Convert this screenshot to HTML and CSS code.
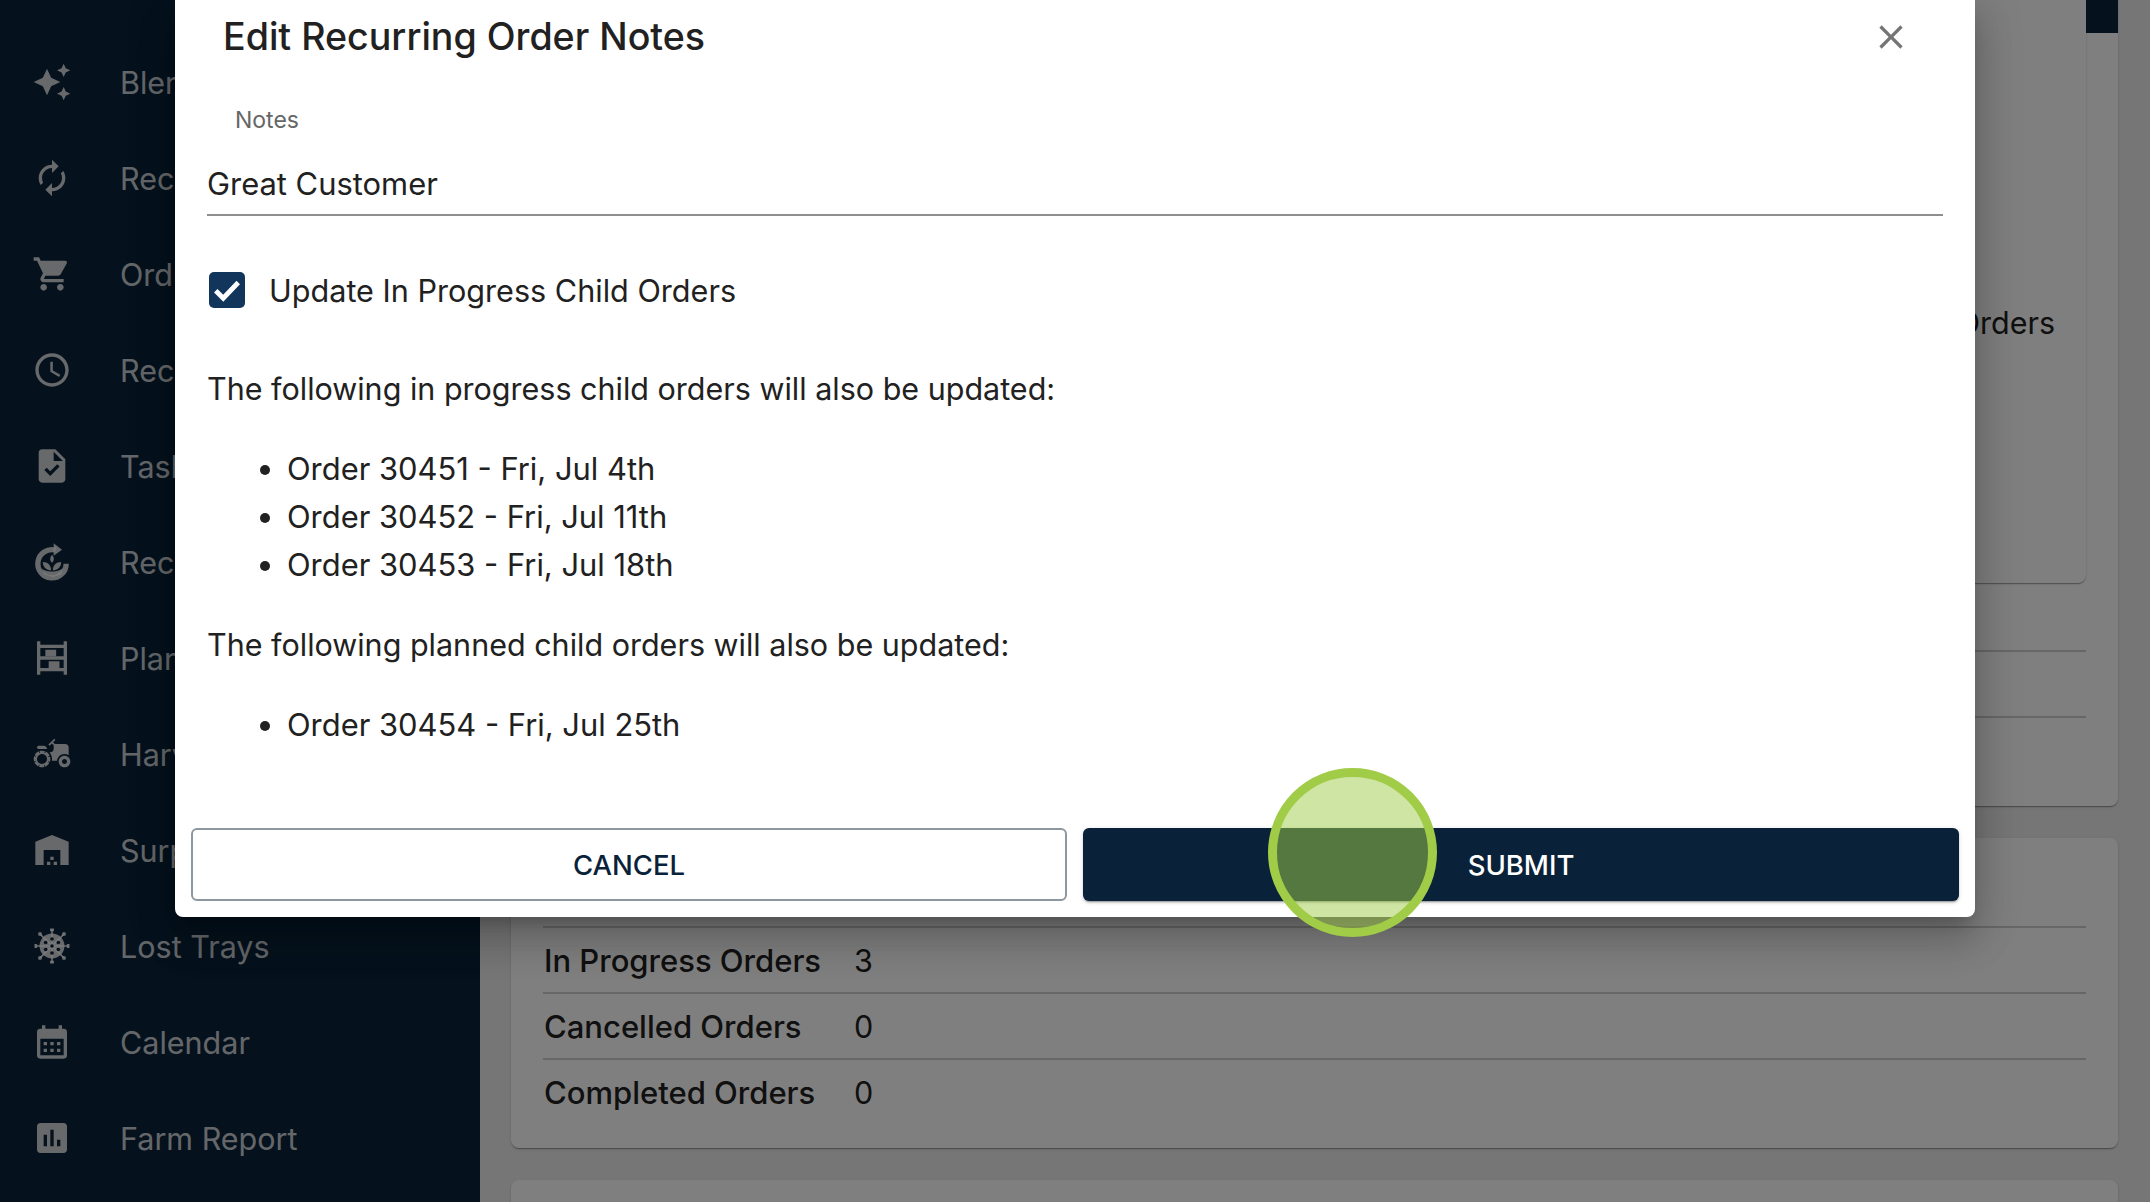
FILE: index.html
```html
<!DOCTYPE html>
<html lang="en">
<head>
<meta charset="utf-8">
<title>Edit Recurring Order Notes</title>
<link rel="stylesheet" href="styles.css">
</head>
<body>
<div class="app">
  <nav class="sidebar">
    <a class="nav-item"><svg class="nav-icon" viewBox="0 0 24 24"><path d="M19 9l1.250-2.750L23 5l-2.750-1.250L19 1l-1.250 2.750L15 5l2.750 1.250L19 9zm-7.500.5L9 4 6.500 9.500 1 12l5.500 2.500L9 20l2.500-5.500L17 12l-5.500-2.500zM19 15l-1.250 2.750L15 19l2.750 1.250L19 23l1.250-2.750L23 19l-2.750-1.250L19 15z"/></svg><span>Blen</span></a>
    <a class="nav-item"><svg class="nav-icon" viewBox="0 0 24 24"><path d="M12 6v3l4-4-4-4v3c-4.420 0-8 3.580-8 8 0 1.570.46 3.030 1.240 4.260L6.700 14.800c-.45-.83-.7-1.790-.7-2.800 0-3.310 2.690-6 6-6zm6.760 1.740L17.300 9.200c.44.84.7 1.790.7 2.800 0 3.310-2.690 6-6 6v-3l-4 4 4 4v-3c4.420 0 8-3.580 8-8 0-1.570-.46-3.030-1.240-4.260z"/></svg><span>Rec</span></a>
    <a class="nav-item"><svg class="nav-icon" viewBox="0 0 24 24"><path d="M7 18c-1.100 0-1.990.9-1.990 2S5.900 22 7 22s2-.9 2-2-.9-2-2-2zM1 2v2h2l3.600 7.590-1.350 2.450c-.16.28-.25.61-.25.96 0 1.100.9 2 2 2h12v-2H7.420c-.14 0-.25-.11-.25-.25l.03-.12.9-1.630h7.450c.75 0 1.410-.41 1.750-1.030l3.580-6.490c.08-.14.12-.31.12-.48 0-.55-.45-1-1-1H5.210l-.94-2H1zm16 16c-1.100 0-1.990.9-1.990 2s.89 2 1.990 2 2-.9 2-2-.9-2-2-2z"/></svg><span>Ord</span></a>
    <a class="nav-item"><svg class="nav-icon" viewBox="0 0 24 24"><path d="M11.990 2C6.470 2 2 6.480 2 12s4.470 10 9.990 10C17.520 22 22 17.520 22 12S17.520 2 11.990 2zM12 20c-4.420 0-8-3.580-8-8s3.580-8 8-8 8 3.580 8 8-3.580 8-8 8zm.5-13H11v6l5.250 3.150.75-1.230-4.500-2.670z"/></svg><span>Rec</span></a>
    <a class="nav-item"><svg class="nav-icon" viewBox="0 0 24 24"><path d="M14 2H6c-1.100 0-1.990.9-1.990 2L4 20c0 1.100.89 2 1.990 2H18c1.100 0 2-.9 2-2V8l-6-6zm-3.060 16L7.400 14.460l1.410-1.410 2.120 2.120 4.240-4.240 1.410 1.410L10.940 18zM13 9V3.500L18.500 9H13z"/></svg><span>Task</span></a>
    <a class="nav-item"><svg class="nav-icon" viewBox="0 0 24 24"><path class="nav-ring" d="M14 4.800A8.500 8.500 0 1 0 20.500 13"/><path d="M13 .8l5 3.800-5 3.700zM11.500 17c-3 0-5-2-5-5 3 0 5 2 5 5zM12.500 17c0-3 2-5 5-5 0 3-2 5-5 5zM12 12.500c-1.500-1.300-1.500-3 0-4.800 1.500 1.800 1.500 3.500 0 4.800zM5.500 15.500c2 3 11 3 13 0l-1 4-5 1.500-5-1.500z"/></svg><span>Rec</span></a>
    <a class="nav-item"><svg class="nav-icon" viewBox="0 0 24 24"><path fill-rule="evenodd" d="M3 2h2v2h14V2h2v20h-2v-2H5v2H3zM5 6v5h14V6zM5 13v5h14v-5z"/><path d="M8 7h6.500v4H8zM10 14h6.500v4H10z"/></svg><span>Plan</span></a>
    <a class="nav-item"><svg class="nav-icon" viewBox="0 0 24 24"><path d="M19.500 12c.93 0 1.780.28 2.500.76V8c0-1.100-.9-2-2-2h-6.290l-1.060-1.060 1.410-1.410-.71-.71L9.820 6.350l.71.71 1.410-1.410L13 6.710V9c0 1.100-.9 2-2 2h-.54c.95 1.060 1.540 2.460 1.540 4 0 .34-.04.67-.09 1h3.140c.25-2.250 2.140-4 4.450-4zm0 1c-1.930 0-3.500 1.570-3.500 3.500s1.570 3.500 3.500 3.500 3.500-1.570 3.500-3.500-1.570-3.500-3.500-3.500zm0 5c-.83 0-1.500-.67-1.500-1.500s.67-1.500 1.500-1.500 1.500.67 1.500 1.500-.67 1.500-1.500 1.500zM4 9h5c0-1.100-.9-2-2-2H4c-.55 0-1 .45-1 1s.45 1 1 1zm5.830 4.820l-.18-.47.93-.35c-.46-1.060-1.280-1.910-2.310-2.430l-.4.89-.46-.21.4-.9C7.260 10.130 6.640 10 6 10c-.53 0-1.040.11-1.520.26l.34.91-.47.18L4 10.420c-1.060.46-1.910 1.280-2.430 2.310l.89.4-.21.46-.9-.4C1.130 13.740 1 14.360 1 15c0 .53.11 1.040.26 1.520l.91-.34.18.47-.93.35c.46 1.060 1.280 1.910 2.310 2.430l.4-.89.46.21-.4.9c.55.22 1.170.35 1.810.35.53 0 1.040-.11 1.520-.26l-.34-.91.47-.18.35.93c1.060-.46 1.910-1.280 2.430-2.310l-.89-.4.21-.46.9.4c.22-.55.35-1.170.35-1.810 0-.53-.11-1.040-.26-1.520l-.91.34zm-2.680 3.950c-1.530.63-3.290-.09-3.920-1.620-.63-1.530.09-3.290 1.620-3.920 1.530-.63 3.290.09 3.920 1.620.64 1.530-.09 3.290-1.620 3.920z"/></svg><span>Harv</span></a>
    <a class="nav-item"><svg class="nav-icon" viewBox="0 0 24 24"><path d="M22 21V7L12 3 2 7v14h5v-9h10v9h5zm-11-2H9v2h2v-2zm2-3h-2v2h2v-2zm2 3h-2v2h2v-2z"/></svg><span>Surp</span></a>
    <a class="nav-item"><svg class="nav-icon" viewBox="0 0 24 24"><path class="nav-spikes" d="M12 2v20M2 12h20M5 5l14 14M19 5L5 19"/><path d="M10.800 1.500h2.400v1.600h-2.400zM10.800 20.900h2.400v1.600h-2.400zM1.500 10.800h1.600v2.400H1.500zM20.900 10.800h1.600v2.400h-1.600z"/><circle cx="4.800" cy="4.800" r="1.200"/><circle cx="19.200" cy="4.800" r="1.200"/><circle cx="4.800" cy="19.200" r="1.200"/><circle cx="19.200" cy="19.200" r="1.200"/><circle cx="12" cy="12" r="7.500"/><circle class="nav-cut" cx="12" cy="7.800" r="1.100"/><circle class="nav-cut" cx="8.200" cy="9.900" r="1.100"/><circle class="nav-cut" cx="15.800" cy="9.900" r="1.100"/><circle class="nav-cut" cx="12" cy="12" r="1.100"/><circle class="nav-cut" cx="8.200" cy="14.100" r="1.100"/><circle class="nav-cut" cx="15.800" cy="14.100" r="1.100"/><circle class="nav-cut" cx="12" cy="16.200" r="1.100"/></svg><span>Lost Trays</span></a>
    <a class="nav-item"><svg class="nav-icon" viewBox="0 0 24 24"><path d="M19 4h-1V2h-2v2H8V2H6v2H5a2 2 0 0 0-2 2v14a2 2 0 0 0 2 2h14a2 2 0 0 0 2-2V6a2 2 0 0 0-2-2zm0 16H5V10h14v10zM7 12h2v2H7zM11 12h2v2h-2zM15 12h2v2h-2zM7 16h2v2H7zM11 16h2v2h-2zM15 16h2v2h-2z"/></svg><span>Calendar</span></a>
    <a class="nav-item"><svg class="nav-icon" viewBox="0 0 24 24"><path d="M19 3H5c-1.100 0-2 .9-2 2v14c0 1.100.9 2 2 2h14c1.100 0 2-.9 2-2V5c0-1.100-.9-2-2-2zM9 17H7v-7h2v7zm4 0h-2V7h2v10zm4 0h-2v-4h2v4z"/></svg><span>Farm Report</span></a>
  </nav>

  <main class="content">
    <section class="card card-top">
      <div class="corner-tab"></div>
      <div class="inner-card">Orders</div>
      <div class="row row-first"></div>
      <div class="row"></div>
      <div class="row"></div>
    </section>
    <section class="card card-stats">
      <div class="row"><span class="row-label">In Progress Orders</span><span>3</span></div>
      <div class="row"><span class="row-label">Cancelled Orders</span><span>0</span></div>
      <div class="row"><span class="row-label">Completed Orders</span><span>0</span></div>
    </section>
    <section class="card card-next"></section>
  </main>
</div>

<div class="overlay"></div>

<div class="modal" role="dialog">
  <header class="modal-head">
    <h2 class="modal-title">Edit Recurring Order Notes</h2>
    <svg class="close-icon" viewBox="0 0 24 24"><path d="M19 6.410 17.590 5 12 10.590 6.410 5 5 6.410 10.590 12 5 17.590 6.410 19 12 13.410 17.590 19 19 17.590 13.410 12z"/></svg>
  </header>
  <div class="modal-body">
    <div class="field">
      <div class="field-label">Notes</div>
      <div class="field-value">Great Customer</div>
    </div>
    <div class="check-row">
      <span class="check-box"><svg viewBox="0 0 24 24"><path d="M4.500 12.500l5 5L19.500 7"/></svg></span>
      <span>Update In Progress Child Orders</span>
    </div>
    <p class="copy">The following in progress child orders will also be updated:</p>
    <ul class="orders">
      <li>Order 30451 - Fri, Jul 4th</li>
      <li>Order 30452 - Fri, Jul 11th</li>
      <li>Order 30453 - Fri, Jul 18th</li>
    </ul>
    <p class="copy">The following planned child orders will also be updated:</p>
    <ul class="orders">
      <li>Order 30454 - Fri, Jul 25th</li>
    </ul>
  </div>
  <footer class="modal-actions">
    <button class="btn btn-outline">CANCEL</button>
    <button class="btn btn-solid">SUBMIT</button>
  </footer>
</div>

<div class="click-marker"></div>
</body>
</html>
```

FILE: styles.css
```css
* { box-sizing: border-box; }

html, body {
  margin: 0;
  height: 1202px;
  overflow: hidden;
}

body {
  position: relative;
  font-family: Inter, "Noto Sans", sans-serif;
  color: #212121;
  background: #ececec;
}

.app {
  display: flex;
  height: 1202px;
}

.sidebar {
  flex: 0 0 480px;
  padding-top: 34px;
  background: #0a2239;
  color: rgba(255, 255, 255, .8);
}

.nav-item {
  display: flex;
  align-items: center;
  height: 96px;
  padding-left: 32px;
  gap: 48px;
  font-size: 30.500px;
  white-space: nowrap;
}

.nav-icon {
  flex: 0 0 40px;
  width: 40px;
  height: 40px;
  fill: currentColor;
}

.nav-cut { fill: #0a2239; }

.nav-ring {
  fill: none;
  stroke: currentColor;
  stroke-width: 3.200;
}

.nav-spikes {
  fill: none;
  stroke: currentColor;
  stroke-width: 1;
}

.content {
  flex: 0 0 1607px;
  margin-left: 31px;
  display: flex;
  flex-direction: column;
  gap: 32px;
}

.card {
  position: relative;
  flex: none;
  padding: 0 32px 23px;
  background: #fff;
  border-radius: 8px;
  box-shadow: 0 2px 1px -1px rgba(0,0,0,.2), 0 1px 1px 0 rgba(0,0,0,.14), 0 1px 3px 0 rgba(0,0,0,.12);
  font-size: 30.500px;
}

.card-top { height: 806px; border-radius: 0 0 8px 8px; }
.card-stats { height: 310px; padding-top: 88px; }
.card-next { height: 60px; }

.corner-tab {
  position: absolute;
  top: 0;
  right: 0;
  width: 32px;
  height: 33px;
  background: #0a2239;
}

.inner-card {
  height: 583px;
  padding: 303px 31px 0 0;
  line-height: 40px;
  text-align: right;
  background: #fff;
  border-radius: 0 0 8px 8px;
  box-shadow: 0 2px 1px -1px rgba(0,0,0,.2), 0 1px 1px 0 rgba(0,0,0,.14), 0 1px 3px 0 rgba(0,0,0,.12);
}

.row {
  display: flex;
  align-items: center;
  height: 66px;
  padding-left: 1px;
  border-top: 2px solid #cfcfcf;
}

.row-first { border-top: 0; height: 67px; }

.row-label {
  flex: 0 0 310px;
  font-size: 31px;
  font-weight: 500;
}

.overlay {
  position: absolute;
  inset: 0;
  background: rgba(0, 0, 0, .5);
}

.modal {
  position: absolute;
  left: 175px;
  top: 0;
  width: 1800px;
  height: 917px;
  display: flex;
  flex-direction: column;
  background: #fff;
  border-radius: 0 0 8px 8px;
  box-shadow: 0 11px 15px -7px rgba(0,0,0,.2), 0 24px 38px 3px rgba(0,0,0,.14), 0 9px 46px 8px rgba(0,0,0,.12);
}

.modal-head {
  display: flex;
  align-items: center;
  justify-content: space-between;
  flex: 0 0 73px;
  padding: 0 64px 0 48px;
}

.modal-title {
  margin: 0;
  font-size: 37.600px;
  font-weight: 500;
}

.close-icon {
  width: 40px;
  height: 40px;
  fill: rgba(0, 0, 0, .54);
}

.modal-body {
  flex: 1;
  padding: 31px 32px 0;
  font-size: 30.500px;
}

.field-label {
  padding-left: 28px;
  font-size: 23px;
  line-height: 32px;
  color: #666;
}

.field-value {
  padding-top: 28px;
  padding-bottom: 10px;
  font-size: 30.900px;
  line-height: 40px;
  border-bottom: 2px solid #8e8e8e;
}

.check-row {
  display: flex;
  align-items: center;
  gap: 24px;
  margin: 56px 0 0 2px;
  height: 36px;
  font-size: 30.600px;
}

.check-box {
  display: block;
  width: 36px;
  height: 36px;
  background: #12355b;
  border-radius: 5px;
}

.check-box svg {
  display: block;
  width: 36px;
  height: 36px;
  fill: none;
  stroke: #fff;
  stroke-width: 3.200;
}

.copy {
  margin: 57px 0 32px;
  line-height: 48px;
}

.orders + .copy { margin-top: 32px; }

.orders {
  margin: 0;
  padding-left: 80px;
  font-size: 30.900px;
  line-height: 48px;
}

.modal-actions {
  display: flex;
  gap: 16px;
  padding: 0 16px 16px;
}

.btn {
  flex: 1 1 50%;
  height: 73px;
  padding: 0;
  font: 500 27.500px Inter, "Noto Sans", sans-serif;
  border-radius: 6px;
}

.btn-outline {
  color: #0a2239;
  background: #fff;
  border: 2px solid #8d979f;
}

.btn-solid {
  color: #fff;
  background: #0a2239;
  border: 0;
  box-shadow: 0 3px 1px -2px rgba(0,0,0,.2), 0 2px 2px 0 rgba(0,0,0,.14), 0 1px 5px 0 rgba(0,0,0,.12);
}

.click-marker {
  position: absolute;
  left: 1268px;
  top: 768px;
  width: 169px;
  height: 169px;
  border: 9px solid #a0cc47;
  border-radius: 50%;
  background: rgba(160, 204, 71, .5);
}
```
